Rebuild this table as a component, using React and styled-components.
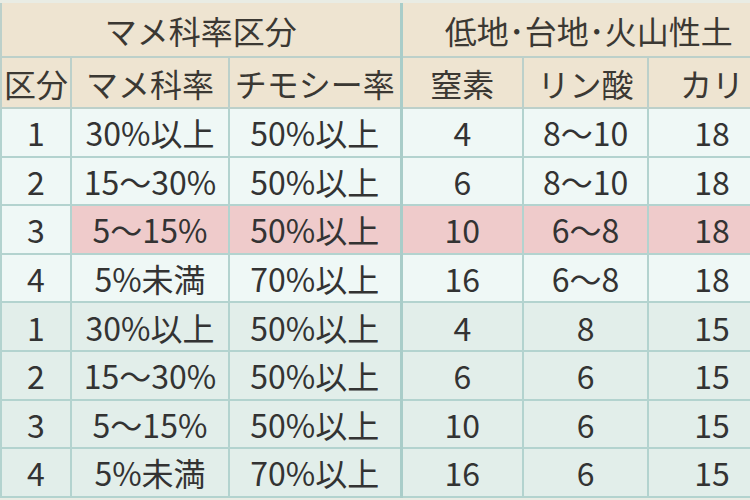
import React from "react";
import styled, { createGlobalStyle } from "styled-components";

const GlobalStyle = createGlobalStyle`
  html, body {
    margin: 0;
    padding: 0;
    background: #e9ece4;
  }
  body {
    font-family: "Noto Sans CJK JP", "Noto Sans", sans-serif;
    color: #353535;
  }
`;

const Frame = styled.div`
  width: 750px;
  height: 500px;
  overflow: hidden;
  padding-top: 3px;
  box-sizing: border-box;
`;

const Table = styled.table`
  border-collapse: collapse;
  table-layout: fixed;
  width: 775px;
  font-size: 32px;
  line-height: 1;
`;

const HeadCell = styled.th`
  background: #eee4d1;
  font-weight: 400;
  height: ${(p) => p.$h || 49}px;
  padding: 0;
  text-align: center;
  border: 2px solid #bcd0ca;
  border-top: none;
  border-left: ${(p) => (p.$split ? "3px solid #a9cdc9" : "2px solid #bcd0ca")};
  color: #3b3833;
  white-space: nowrap;
`;

const Cell = styled.td`
  height: 46.6px;
  padding: 0;
  text-align: center;
  border: 2px solid #b3d3cf;
  border-left: ${(p) => (p.$split ? "3px solid #a9cdc9" : "2px solid #b3d3cf")};
  background: ${(p) =>
    p.$pink ? "#efcbcb" : p.$shade ? "#e2eeea" : "#eff8f6"};
  color: #333;
  white-space: nowrap;
`;

const rows = [
  ["1", "30%以上", "50%以上", "4", "8〜10", "18"],
  ["2", "15〜30%", "50%以上", "6", "8〜10", "18"],
  ["3", "5〜15%", "50%以上", "10", "6〜8", "18", true],
  ["4", "5%未満", "70%以上", "16", "6〜8", "18"],
  ["1", "30%以上", "50%以上", "4", "8", "15"],
  ["2", "15〜30%", "50%以上", "6", "6", "15"],
  ["3", "5〜15%", "50%以上", "10", "6", "15"],
  ["4", "5%未満", "70%以上", "16", "6", "15"],
];

export default function App() {
  return (
    <Frame>
      <GlobalStyle />
      <Table>
        <colgroup>
          <col style={{ width: 70 }} />
          <col style={{ width: 158 }} />
          <col style={{ width: 172 }} />
          <col style={{ width: 122 }} />
          <col style={{ width: 125 }} />
          <col style={{ width: 128 }} />
        </colgroup>
        <thead>
          <tr>
            <HeadCell colSpan={3} $h={53}>
              マメ科率区分
            </HeadCell>
            <HeadCell colSpan={3} $h={53} $split>
              低地･台地･火山性土
            </HeadCell>
          </tr>
          <tr>
            <HeadCell>区分</HeadCell>
            <HeadCell>マメ科率</HeadCell>
            <HeadCell>チモシー率</HeadCell>
            <HeadCell $split>窒素</HeadCell>
            <HeadCell>リン酸</HeadCell>
            <HeadCell>カリ</HeadCell>
          </tr>
        </thead>
        <tbody>
          {rows.map((r, i) => {
            const shade = i >= 4;
            const pink = r[6];
            return (
              <tr key={i}>
                <Cell $shade={shade}>{r[0]}</Cell>
                <Cell $shade={shade} $pink={pink}>{r[1]}</Cell>
                <Cell $shade={shade} $pink={pink}>{r[2]}</Cell>
                <Cell $shade={shade} $pink={pink} $split>{r[3]}</Cell>
                <Cell $shade={shade} $pink={pink}>{r[4]}</Cell>
                <Cell $shade={shade} $pink={pink}>{r[5]}</Cell>
              </tr>
            );
          })}
        </tbody>
      </Table>
    </Frame>
  );
}
